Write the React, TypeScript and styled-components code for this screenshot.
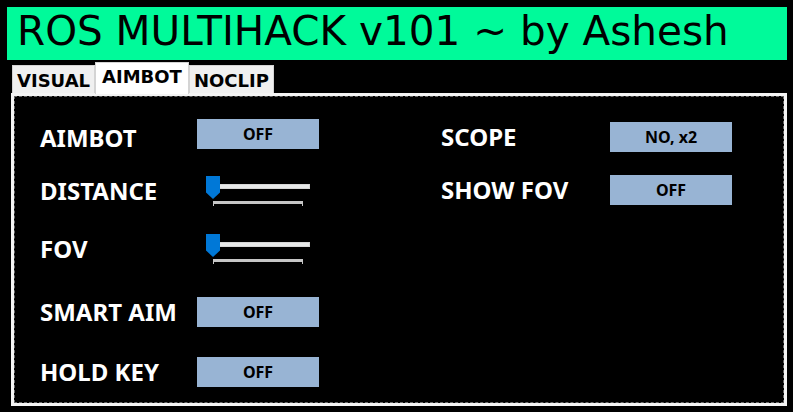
import React from "react";
import styled, { createGlobalStyle } from "styled-components";

const GlobalStyle = createGlobalStyle`
  html, body {
    margin: 0;
    padding: 0;
    background: #000;
  }
  body {
    width: 793px;
    height: 412px;
    overflow: hidden;
  }
`;

const Window = styled.div`
  display: flex;
  flex-direction: column;
  padding: 7px 6px 0 7px;
  box-sizing: border-box;
  width: 793px;
  height: 412px;
  background: #000;
`;

const TitleBar = styled.h1`
  margin: 0;
  height: 53px;
  box-sizing: border-box;
  padding: 0 0 4px 10px;
  background: #00fa9a;
  color: #000;
  font-family: "DejaVu Sans", Verdana, sans-serif;
  font-weight: 400;
  font-size: 40.5px;
  line-height: 49px;
  white-space: nowrap;
`;

const TabStrip = styled.div`
  display: flex;
  align-items: flex-end;
  height: 30px;
  margin-top: 3px;
  padding-left: 5px;
  position: relative;
  z-index: 1;
`;

const Tab = styled.div<{ $active?: boolean }>`
  box-sizing: border-box;
  height: ${(p) => (p.$active ? "32px" : "28px")};
  margin-bottom: ${(p) => (p.$active ? "-1px" : "0")};
  padding: ${(p) => (p.$active ? "2px 6px 0" : "3px 4px 0")};
  border: 1px solid #d4d4d4;
  border-bottom: none;
  background: ${(p) => (p.$active ? "#fff" : "#f0f0f0")};
  color: #000;
  font-family: "DejaVu Sans", Verdana, sans-serif;
  font-weight: 700;
  font-size: 18px;
  line-height: 24px;
  white-space: nowrap;
`;

const Panel = styled.div`
  margin-left: 4px;
  width: 776px;
  height: 313px;
  box-sizing: border-box;
  border: 3px solid #f4f4f4;
`;

const PanelBody = styled.div`
  display: grid;
  grid-template-columns: 401px 1fr;
  height: 100%;
  box-sizing: border-box;
  border: 1px dashed #6a6a6a;
  padding: 15px 0 0 25px;
  background: #000;
`;

const OptionGrid = styled.div<{ $labelWidth: number; $rows: string }>`
  display: grid;
  grid-template-columns: ${(p) => p.$labelWidth}px 122px;
  grid-template-rows: ${(p) => p.$rows};
  align-items: center;
  align-content: start;
`;

const Label = styled.span`
  color: #fff;
  font-family: "Noto Sans", "Open Sans", sans-serif;
  font-weight: 700;
  font-size: 24px;
  line-height: 28px;
  white-space: nowrap;
`;

const ToggleButton = styled.button<{ $lift?: number }>`
  width: 122px;
  height: 30px;
  margin: 0 0 ${(p) => (p.$lift ? p.$lift * 2 : 0)}px 0;
  padding: 0;
  border: none;
  background: #98b4d4;
  color: #000;
  font-family: "Noto Sans", "Open Sans", sans-serif;
  font-weight: 700;
  font-size: 16px;
  line-height: 30px;
  text-align: center;
  cursor: pointer;
`;

const SliderBox = styled.div`
  position: relative;
  width: 122px;
  height: 30px;
  display: flex;
  flex-direction: column;
  padding: 8px 0 0 9px;
  box-sizing: border-box;
`;

const SliderTrack = styled.div`
  width: 104px;
  height: 5px;
  box-sizing: border-box;
  background: #e7e9e9;
  border: 1px solid #d6d6d6;
`;

const SliderTicks = styled.div`
  position: relative;
  margin: 12px 0 0 7px;
  width: 90px;
  height: 3px;
  background: #c6c6c6;

  &::before,
  &::after {
    content: "";
    position: absolute;
    top: 0;
    width: 1px;
    height: 5px;
    background: #c6c6c6;
  }
  &::before {
    left: 0;
  }
  &::after {
    right: 0;
  }
`;

const SliderThumb = styled.div`
  position: absolute;
  left: 9px;
  top: 0;
  width: 14px;
  height: 23px;
  background: #0078d7;
  clip-path: polygon(0 0, 100% 0, 100% 72%, 50% 100%, 0 72%);
`;

function Slider() {
  return (
    <SliderBox>
      <SliderTrack />
      <SliderTicks />
      <SliderThumb />
    </SliderBox>
  );
}

export default function App() {
  return (
    <>
      <GlobalStyle />
      <Window>
        <TitleBar>ROS MULTIHACK v101 ~ by Ashesh</TitleBar>
        <TabStrip>
          <Tab>VISUAL</Tab>
          <Tab $active>AIMBOT</Tab>
          <Tab>NOCLIP</Tab>
        </TabStrip>
        <Panel>
          <PanelBody>
            <OptionGrid $labelWidth={157} $rows="52px 54px 62px 63px 57px">
              <Label>AIMBOT</Label>
              <ToggleButton $lift={4}>OFF</ToggleButton>
              <Label>DISTANCE</Label>
              <Slider />
              <Label>FOV</Label>
              <Slider />
              <Label>SMART AIM</Label>
              <ToggleButton>OFF</ToggleButton>
              <Label>HOLD KEY</Label>
              <ToggleButton>OFF</ToggleButton>
            </OptionGrid>
            <OptionGrid $labelWidth={169} $rows="50px 56px">
              <Label>SCOPE</Label>
              <ToggleButton>NO, x2</ToggleButton>
              <Label>SHOW FOV</Label>
              <ToggleButton>OFF</ToggleButton>
            </OptionGrid>
          </PanelBody>
        </Panel>
      </Window>
    </>
  );
}
